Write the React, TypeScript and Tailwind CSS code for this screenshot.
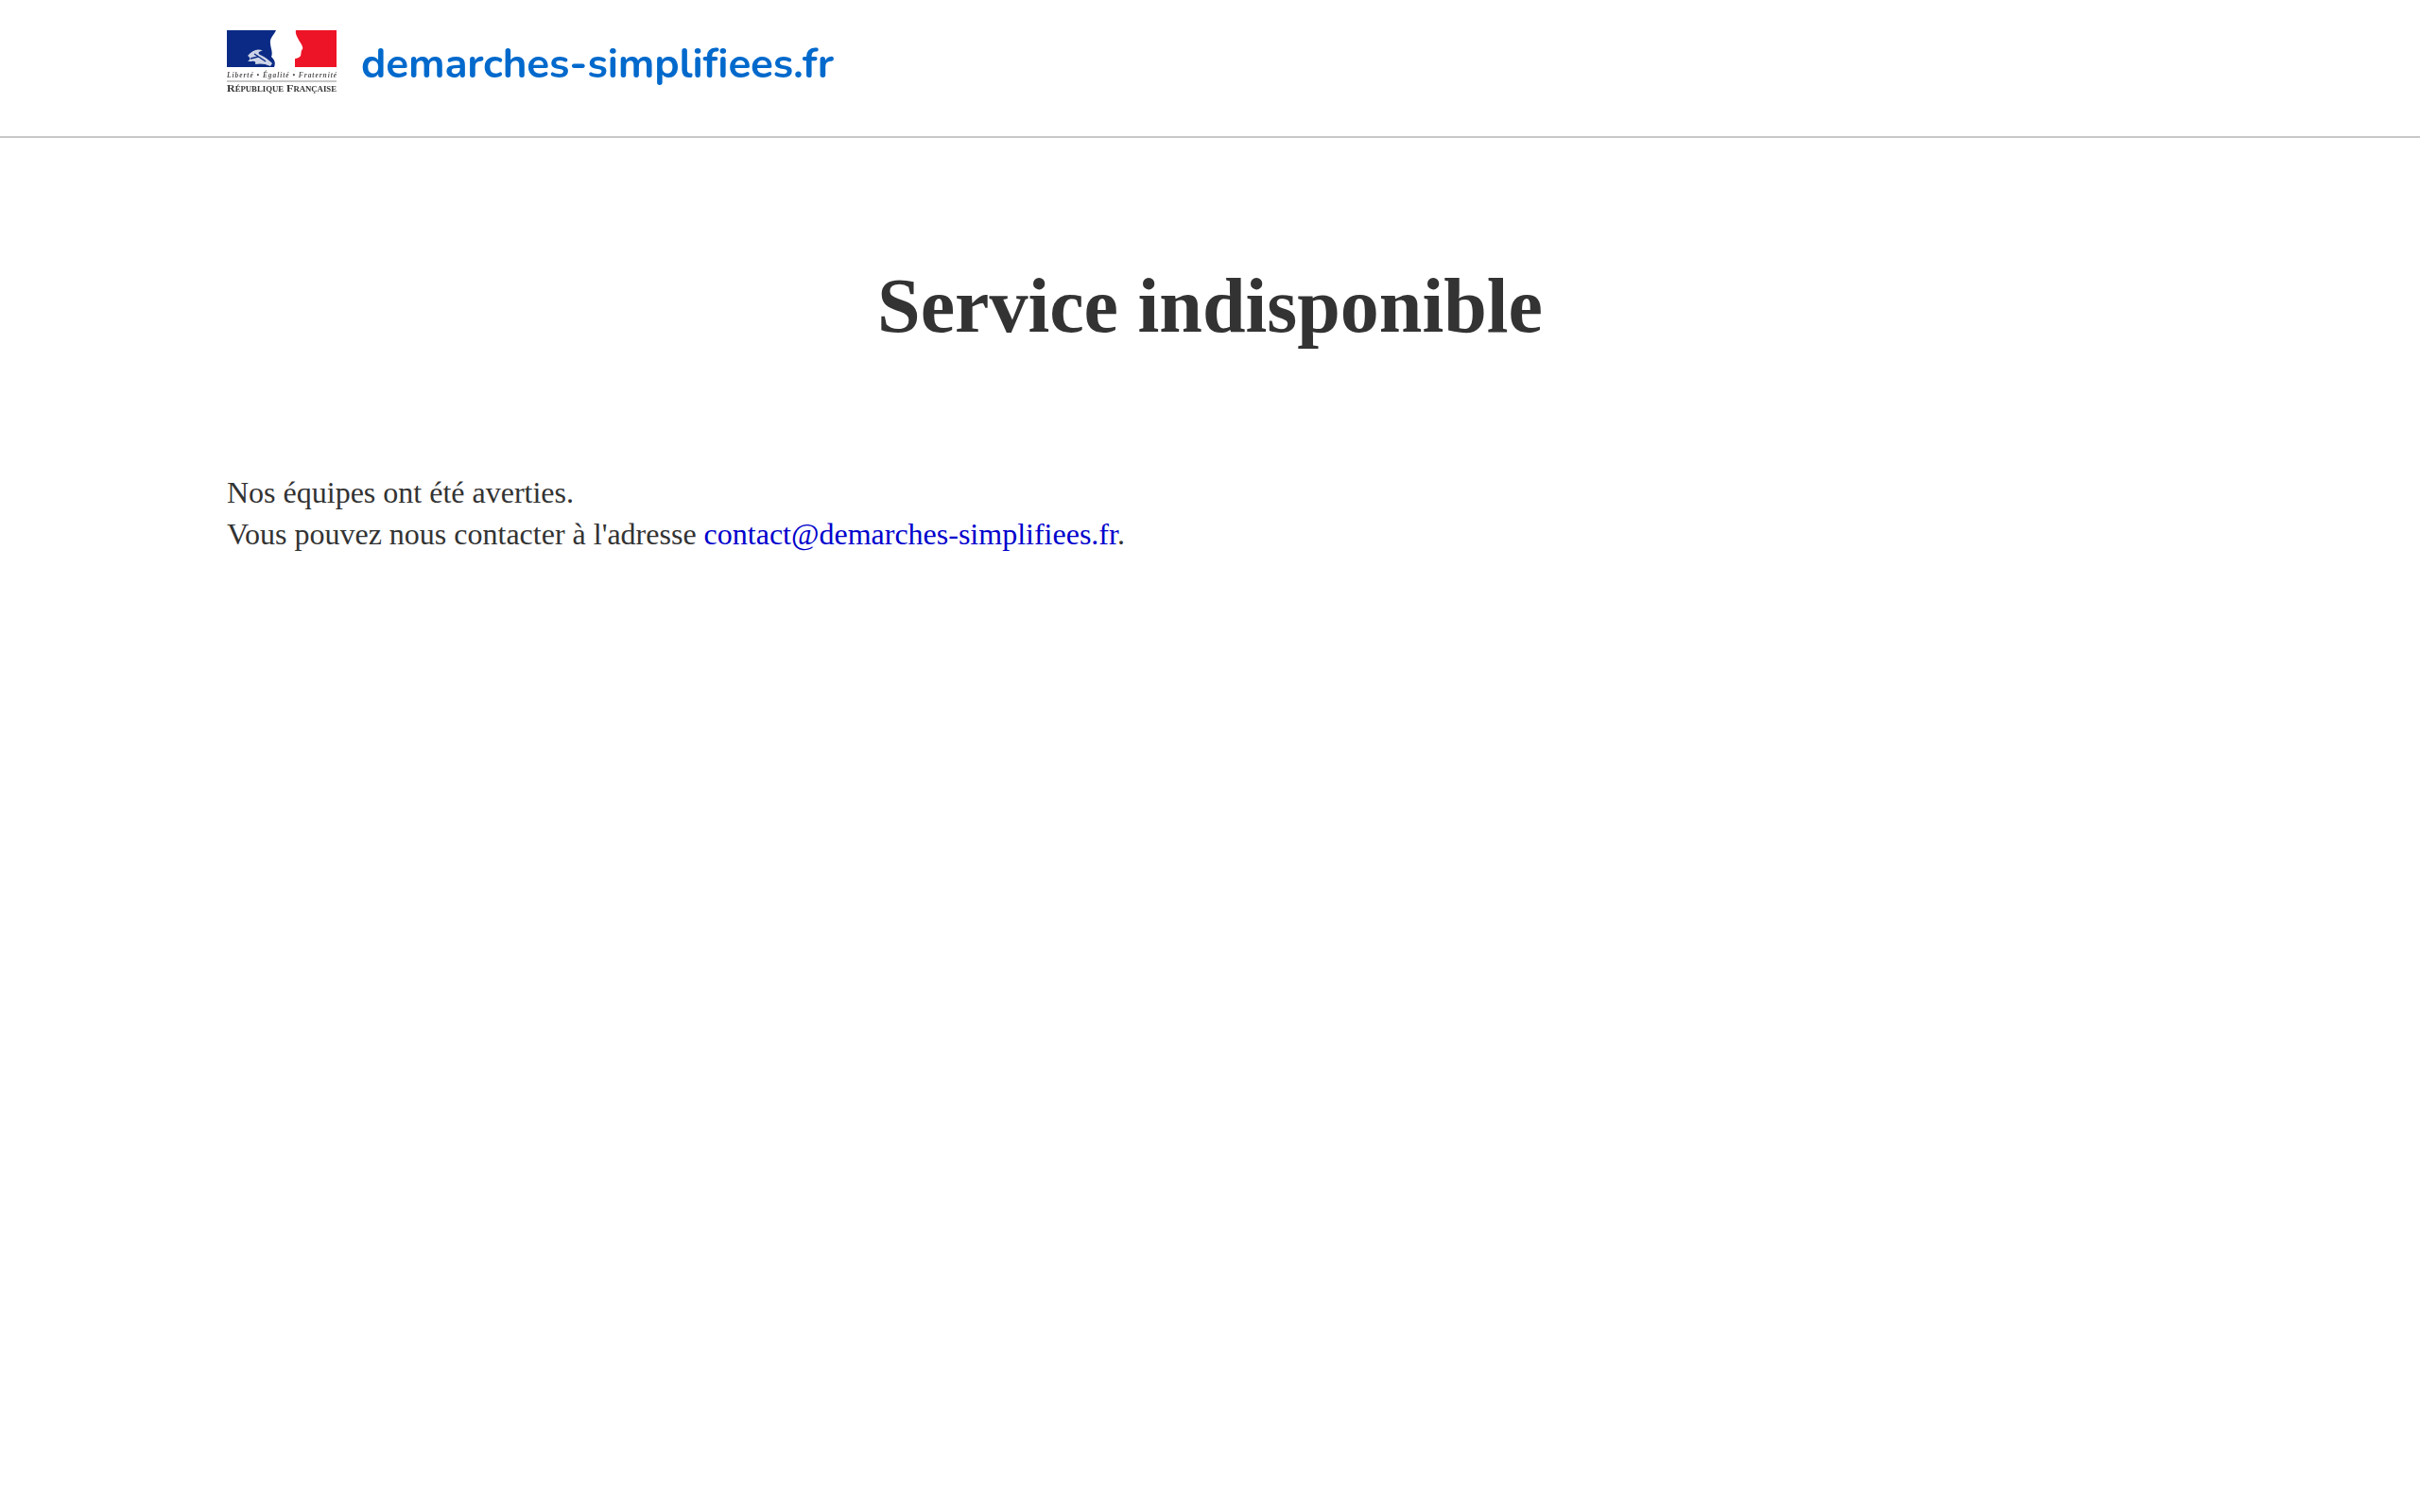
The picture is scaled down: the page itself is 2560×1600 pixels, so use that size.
import React from "react";

function Marianne() {
  return (
    <svg width="116" height="70" viewBox="0 0 116 70" className="block shrink-0 blur-[0.5px]">
      <rect x="0" y="0" width="52" height="39" fill="#0a2a85" />
      <rect x="72" y="0" width="44" height="39" fill="#ee1427" />
      <path d="M52 0 L73 0 C72 4 75 8 77 12 C79 15 81 18 80 20 C78 22 79 24 78 27 C76 30 72 30 69 31 C68 34 68 36 67 39 L50 39 C52 34 50 31 47 28 C49 24 46 18 46 14 C45 8 50 5 52 0 Z" fill="#ffffff" />
      <path d="M22 27 C27 21 33 19 38 22 C34 22 32 24 35 26 C38 27 43 30 48 35 L46 38 C40 35 34 35 30 36 C31 33 29 32 26 33 L22 33 C25 31 25 29 22 27 Z" fill="#ffffff" fillOpacity="0.8" />
      <path d="M29 25 L41 33 M25 30 L33 28" stroke="#0a2a85" strokeWidth="1.5" fill="none" />
      <text x="0" y="49.5" fontSize="7.4" fontStyle="italic" fontWeight="700" textLength="116" lengthAdjust="spacing" fontFamily="'Liberation Serif', serif" fill="#555">Liberté • Égalité • Fraternité</text>
      <rect x="0" y="53.5" width="116" height="1" fill="#8f8f8f" />
      <text x="0" y="65" fontSize="11" fontWeight="700" textLength="116" lengthAdjust="spacingAndGlyphs" fontFamily="'Liberation Serif', serif" fill="#333" style={{ fontVariant: "small-caps" }}>République Française</text>
    </svg>
  );
}

export default function App() {
  return (
    <div className="min-h-[1600px] bg-white font-['Liberation_Serif',serif] text-[#333333]">
      <header className="h-[146px] border-b-2 border-[#c8c8c8] px-[240px] pt-[32px]">
        <div className="flex items-start gap-[26px]">
          <Marianne />
          <span className="mt-[14px] font-['Nunito','Lato',sans-serif] text-[44px] leading-[44px] font-bold tracking-[-0.15px] text-[#0069cc] blur-[0.4px]">
            demarches-simplifiees.fr
          </span>
        </div>
      </header>
      <main className="px-[240px]">
        <h1 className="mt-[131px] text-center text-[82px] leading-[94px] font-bold">Service indisponible</h1>
        <p className="mt-[128px] text-[32px] leading-[44px]">
          Nos équipes ont été averties.
          <br />
          Vous pouvez nous contacter à l'adresse{" "}
          <a href="#" className="text-[#0000cc]">contact@demarches-simplifiees.fr</a>.
        </p>
      </main>
    </div>
  );
}
